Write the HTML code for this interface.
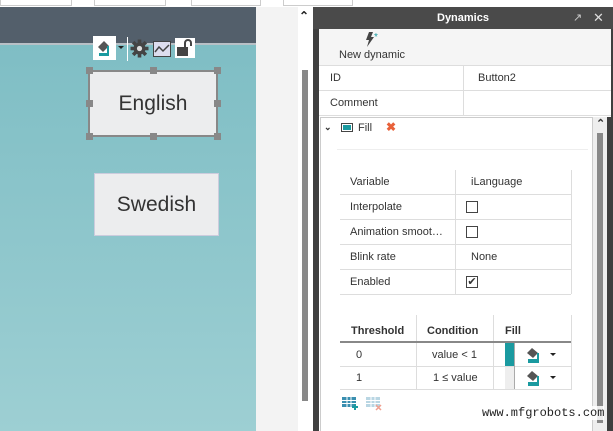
<!DOCTYPE html>
<html><head><style>
*{margin:0;padding:0;box-sizing:border-box}
body{width:613px;height:431px;overflow:hidden;position:relative;background:#fff;font-family:"Liberation Sans",sans-serif;font-size:11px;color:#333}
.a{position:absolute}
.hl{position:absolute;height:1px;background:#ddd}
.vl{position:absolute;width:1px;background:#ddd}
.cb{position:absolute;width:12px;height:12px;border:1px solid #444;background:#fff}
.h{position:absolute;width:7px;height:7px;background:#888}
</style></head><body>
<div class="a" style="left:0;top:0;width:613px;height:7px;background:#fff"></div>
<div class="a" style="left:0;top:-2px;width:72px;height:8px;border:1px solid #ccc"></div>
<div class="a" style="left:94px;top:-2px;width:72px;height:8px;border:1px solid #ccc"></div>
<div class="a" style="left:191px;top:-2px;width:70px;height:8px;border:1px solid #ccc"></div>
<div class="a" style="left:283px;top:-2px;width:70px;height:8px;border:1px solid #ccc"></div>
<div class="a" style="left:0;top:7px;width:256px;height:424px;background:linear-gradient(#7cbcc3,#9dcfd3)"></div>
<div class="a" style="left:0;top:7px;width:256px;height:38px;background:#535f6b;border-bottom:2px solid #b8c0c6"></div>
<div class="a" style="left:256px;top:7px;width:42px;height:424px;background:#f3f3f3"></div>
<div class="a" style="left:298px;top:7px;width:15px;height:424px;background:#fff"></div>
<div class="a" style="left:302px;top:70px;width:6px;height:331px;background:#888"></div>
<div class="a" style="left:299px;top:9px;font-size:12px;color:#222;font-weight:bold">&#8963;</div>
<div class="a" style="left:93px;top:36px;width:23px;height:24px;background:#fff"></div>
<svg class="a" style="left:95px;top:38px" width="18" height="20"><path d="M3 9 L9 3 L14 8 L8 14Z" fill="#555"/><rect x="4" y="15" width="10" height="3" fill="#1a9aa0"/><rect x="12" y="8" width="2" height="7" fill="#1a9aa0"/></svg>
<div class="a" style="left:118px;top:46px;border:3px solid transparent;border-top:3px solid #222"></div>
<div class="a" style="left:127px;top:37px;width:1px;height:24px;background:#fff"></div>
<svg class="a" style="left:130px;top:39px" width="19" height="19"><g fill="#444" transform="translate(9.5 9.5)"><circle r="6"/><rect x="-1.8" y="-9" width="3.6" height="18"/><rect x="-9" y="-1.8" width="18" height="3.6"/><rect x="-1.8" y="-9" width="3.6" height="18" transform="rotate(45)"/><rect x="-1.8" y="-9" width="3.6" height="18" transform="rotate(-45)"/></g><circle cx="9.5" cy="9.5" r="2.6" fill="#ddd"/></svg>
<svg class="a" style="left:153px;top:41px" width="18" height="16"><rect x="0.5" y="0.5" width="17" height="15" fill="#dde" stroke="#444"/><path d="M2 11 L6 6 L10 10 L16 4" fill="none" stroke="#444" stroke-width="1.5"/></svg>
<div class="a" style="left:175px;top:38px;width:20px;height:20px;background:#fff"></div>
<svg class="a" style="left:176px;top:39px" width="18" height="18"><rect x="1" y="8" width="11" height="9" fill="#444"/><path d="M9 8 V4 a3 3 0 0 1 6 0 V7" fill="none" stroke="#444" stroke-width="2"/></svg>
<div class="a" style="left:88px;top:70px;width:130px;height:67px;border:2px solid #888;background:#ecedee;font-size:21px;text-align:center;line-height:63px;color:#333">English</div>
<div class="h" style="left:86px;top:67px"></div><div class="h" style="left:150px;top:67px"></div><div class="h" style="left:214px;top:67px"></div>
<div class="h" style="left:86px;top:100px"></div><div class="h" style="left:214px;top:100px"></div>
<div class="h" style="left:86px;top:133px"></div><div class="h" style="left:150px;top:133px"></div><div class="h" style="left:214px;top:133px"></div>
<div class="a" style="left:94px;top:173px;width:125px;height:63px;background:#ecedee;border:1px solid #ccd;font-size:21px;text-align:center;line-height:61px;color:#333">Swedish</div>
<div class="a" style="left:313px;top:7px;width:300px;height:424px;background:#3f3f3f"></div>
<div class="a" style="left:313px;top:7px;width:300px;height:22px;background:#4a4a4a;color:#fff;font-weight:bold;font-size:11px;text-align:center;line-height:22px">Dynamics</div>
<div class="a" style="left:573px;top:11px;color:#ccc;font-size:11px">&#8599;</div>
<div class="a" style="left:593px;top:10px;color:#ddd;font-size:13px">&#10005;</div>
<div class="a" style="left:319px;top:29px;width:292px;height:402px;background:#fff"></div>
<div class="a" style="left:319px;top:29px;width:292px;height:36px;background:#f5f5f5"></div>
<svg class="a" style="left:363px;top:31px" width="18" height="18"><path d="M6 1 L10 1 L8 6 L11 6 L4 16 L6 9 L3 9Z" fill="#444"/><text x="11" y="9" font-size="10" fill="#1a9aa0" font-family="Liberation Sans">*</text></svg>
<div class="a" style="left:339px;top:49px;font-size:11px">New dynamic</div>
<div class="hl" style="left:319px;top:65px;width:292px"></div>
<div class="a" style="left:330px;top:72px">ID</div><div class="a" style="left:478px;top:72px">Button2</div>
<div class="hl" style="left:319px;top:90px;width:292px"></div>
<div class="a" style="left:330px;top:97px">Comment</div>
<div class="vl" style="left:463px;top:65px;height:50px"></div>
<div class="hl" style="left:319px;top:115px;width:292px"></div>
<div class="a" style="left:320px;top:117px;width:273px;height:314px;border:1px solid #ccc;border-bottom:none"></div>
<div class="a" style="left:593px;top:117px;width:14px;height:314px;background:#eee"></div>
<div class="a" style="left:597px;top:133px;width:6px;height:290px;background:#888"></div>
<div class="a" style="left:596px;top:117px;font-size:11px;font-weight:bold">&#8963;</div>
<div class="a" style="left:607px;top:117px;width:4px;height:314px;background:#3f3f3f"></div>
<div class="a" style="left:324px;top:122px;font-size:9px;font-weight:bold">&#8964;</div>
<div class="a" style="left:341px;top:123px;width:12px;height:9px;border:1px solid #444;background:#1a9aa0;box-shadow:inset 0 0 0 1px #fff"></div>
<div class="a" style="left:358px;top:122px">Fill</div>
<div class="a" style="left:386px;top:120px;color:#e8613a;font-size:12px;font-weight:bold">&#10006;</div>
<div class="hl" style="left:337px;top:149px;width:251px;background:#eee"></div>
<div class="vl" style="left:455px;top:170px;height:124px"></div>
<div class="vl" style="left:571px;top:170px;height:124px"></div>
<div class="hl" style="left:340px;top:194px;width:231px"></div>
<div class="hl" style="left:340px;top:219px;width:231px"></div>
<div class="hl" style="left:340px;top:244px;width:231px"></div>
<div class="hl" style="left:340px;top:269px;width:231px"></div>
<div class="hl" style="left:340px;top:294px;width:231px"></div>
<div class="a" style="left:350px;top:176px">Variable</div><div class="a" style="left:471px;top:176px">iLanguage</div>
<div class="a" style="left:350px;top:201px">Interpolate</div><div class="cb" style="left:466px;top:201px"></div>
<div class="a" style="left:350px;top:226px">Animation smoot…</div><div class="cb" style="left:466px;top:226px"></div>
<div class="a" style="left:350px;top:251px">Blink rate</div><div class="a" style="left:471px;top:251px">None</div>
<div class="a" style="left:350px;top:276px">Enabled</div><div class="cb" style="left:466px;top:276px;font-size:11px;line-height:10px;text-align:center">&#10004;</div>
<div class="vl" style="left:416px;top:315px;height:75px"></div>
<div class="vl" style="left:493px;top:315px;height:75px"></div>
<div class="vl" style="left:571px;top:315px;height:75px"></div>
<div class="hl" style="left:340px;top:341px;width:231px;height:2px;background:#888"></div>
<div class="hl" style="left:340px;top:366px;width:231px"></div>
<div class="hl" style="left:340px;top:389px;width:231px"></div>
<div class="a" style="left:351px;top:325px;font-weight:bold">Threshold</div>
<div class="a" style="left:427px;top:325px;font-weight:bold">Condition</div>
<div class="a" style="left:505px;top:325px;font-weight:bold">Fill</div>
<div class="a" style="left:356px;top:349px">0</div><div class="a" style="left:432px;top:349px">value &lt; 1</div>
<div class="a" style="left:356px;top:372px">1</div><div class="a" style="left:433px;top:372px">1 ≤ value</div>
<div class="a" style="left:505px;top:343px;width:9px;height:23px;background:#1a9aa0"></div>
<div class="a" style="left:505px;top:367px;width:9px;height:22px;background:#eee"></div>
<div class="vl" style="left:514px;top:343px;height:46px;background:#aaa"></div>
<svg class="a" style="left:525px;top:346px" width="20" height="20"><path d="M2 7 L7 2 L13 7 L8 12Z" fill="#555"/><rect x="3" y="13" width="11" height="4" fill="#1a9aa0"/><rect x="12" y="7" width="2" height="7" fill="#1a9aa0"/></svg>
<svg class="a" style="left:525px;top:369px" width="20" height="20"><path d="M2 7 L7 2 L13 7 L8 12Z" fill="#555"/><rect x="3" y="13" width="11" height="4" fill="#1a9aa0"/><rect x="12" y="7" width="2" height="7" fill="#1a9aa0"/></svg>
<div class="a" style="left:550px;top:353px;border:3px solid transparent;border-top:3px solid #222"></div>
<div class="a" style="left:550px;top:376px;border:3px solid transparent;border-top:3px solid #222"></div>
<svg class="a" style="left:342px;top:397px" width="18" height="14"><rect x="0" y="0" width="14" height="10" fill="#3a8fb0"/><path d="M0 3.5h14M0 6.5h14M5 0v10M9 0v10" stroke="#fff"/><path d="M13 7v6M10 10h6" stroke="#1a9aa0" stroke-width="2"/></svg>
<svg class="a" style="left:366px;top:397px" width="18" height="14"><rect x="0" y="0" width="14" height="10" fill="#b9d6e3"/><path d="M0 3.5h14M0 6.5h14M5 0v10M9 0v10" stroke="#fff"/><path d="M10 8l5 5M15 8l-5 5" stroke="#f0a090" stroke-width="1.5"/></svg>
<div class="a" style="left:482px;top:406px;font-family:'Liberation Mono',monospace;font-size:12px;color:#222;background:rgba(255,255,255,.85)">www.mfgrobots.com</div>
</body></html>
